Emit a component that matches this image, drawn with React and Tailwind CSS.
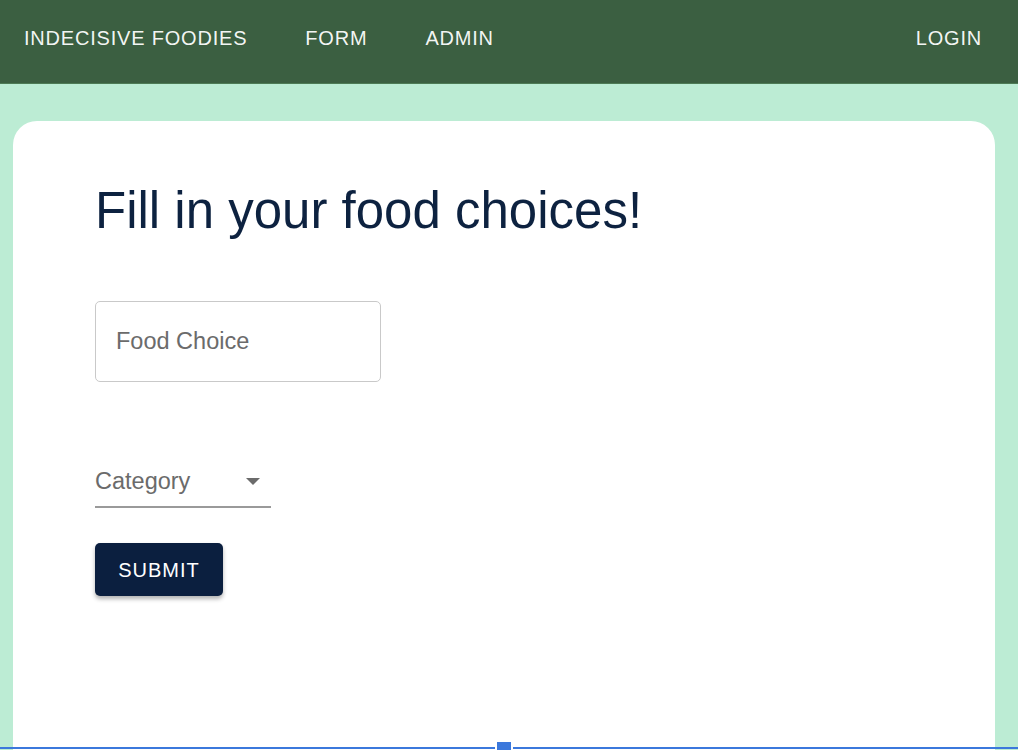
import React from "react";

const NavLink = ({ children }) => (
  <a href="#" className="text-[20px] tracking-[0.04em] text-white/95 uppercase">
    {children}
  </a>
);

const App = () => {
  return (
    <div className="min-h-[750px] h-[750px] overflow-hidden bg-[#bcecd4] font-['Liberation_Sans',Arial,sans-serif]">
      {/* Navbar */}
      <nav className="h-[84px] bg-[#3b5f41] flex items-center px-6 pb-[8px] border-b border-[#4d7a55]">
        <div className="flex items-center gap-[58px]">
          <NavLink>Indecisive Foodies</NavLink>
          <NavLink>Form</NavLink>
          <NavLink>Admin</NavLink>
        </div>
        <div className="ml-auto pr-[12px]">
          <NavLink>Login</NavLink>
        </div>
      </nav>

      {/* Card */}
      <div className="px-[13px] pt-[37px] pr-[23px]">
        <div className="bg-white rounded-[24px] h-[700px] pl-[82px] pt-[60px]">
          <h1 className="text-[51px] leading-[60px] text-[#0d2240]">
            Fill in your food choices!
          </h1>

          <div className="mt-[60px] w-[286px] h-[81px] border border-[#c9c9c9] rounded-[5px] flex items-center px-[20px]">
            <input
              placeholder="Food Choice"
              className="w-full outline-none text-[23.5px] text-[#555] placeholder:text-[#6b6b6b]"
            />
          </div>

          <div className="mt-[82px] w-[176px] border-b-2 border-[#9a9a9a] flex items-center justify-between pb-[7px]">
            <span className="text-[23.5px] text-[#6b6b6b]">Category</span>
            <svg width="14" height="7" viewBox="0 0 14 7" className="mr-[11px]">
              <path d="M0 0 L14 0 L7 7 Z" fill="#6b6b6b" />
            </svg>
          </div>

          <button className="mt-[35px] w-[128px] h-[53px] rounded-[5px] bg-[#0b1f3f] text-white text-[20px] tracking-[0.05em] shadow-[0_3px_4px_rgba(0,0,0,0.3)]">
            SUBMIT
          </button>
        </div>
      </div>

      {/* bottom guide line */}
      <div className="fixed left-0 right-0 bottom-[1px] h-[2px] bg-[#3b78dc]" />
      <div className="fixed left-[495px] bottom-0 w-[18px] h-[8px] bg-white" />
      <div className="fixed left-[497px] bottom-0 w-[14px] h-[8px] bg-[#3b78dc]" />
    </div>
  );
};

export default App;
